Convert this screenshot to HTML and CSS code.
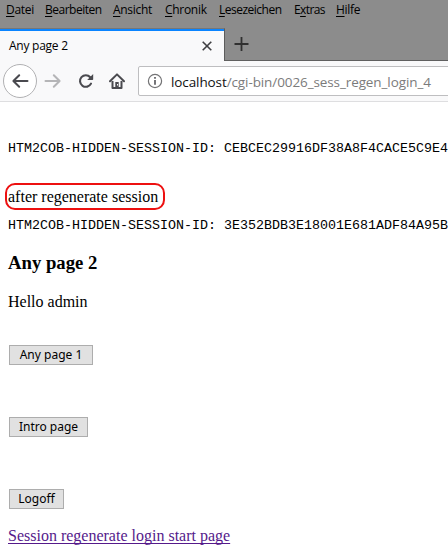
FILE: index.html
```html
<!DOCTYPE html>
<html lang="de">
<head>
<meta charset="utf-8">
<title>Any page 2</title>
<link rel="stylesheet" href="styles.css">
</head>
<body>
<nav class="menu">
  <span class="m-datei"><u>D</u>atei</span>
  <span class="m-bearbeiten"><u>B</u>earbeiten</span>
  <span class="m-ansicht"><u>A</u>nsicht</span>
  <span class="m-chronik"><u>C</u>hronik</span>
  <span class="m-lesezeichen"><u>L</u>esezeichen</span>
  <span class="m-extras">E<u>x</u>tras</span>
  <span class="m-hilfe"><u>H</u>ilfe</span>
</nav>
<div class="tabs">
  <div class="tab">
    <span class="tab-title">Any page 2</span>
    <svg width="12" height="12" viewBox="0 0 12 12"><path d="M1.7 1.7 10.3 10.3M10.3 1.7 1.7 10.3" stroke="#3f3f42" stroke-width="1.6"/></svg>
  </div>
  <div class="strip">
    <svg width="16" height="16" viewBox="0 0 16 16"><path d="M8.5 1V15M1.5 8H15.5" stroke="#303030" stroke-width="1.8"/></svg>
  </div>
</div>
<div class="toolbar">
  <span class="back"><svg width="18" height="16" viewBox="0 0 18 16"><path d="M16.5 8H2.5M8.2 2.2 2.4 8 8.2 13.8" fill="none" stroke="#4a4a4f" stroke-width="2" stroke-linecap="round" stroke-linejoin="round"/></svg></span>
  <svg class="forward" width="18" height="16" viewBox="0 0 18 16"><path d="M1.5 8H15.5M9.8 2.2 15.6 8 9.8 13.8" fill="none" stroke="#b5b5b7" stroke-width="2" stroke-linecap="round" stroke-linejoin="round"/></svg>
  <svg class="reload" width="16" height="16" viewBox="0 0 16 16"><path d="M12.2 4.2A5.8 5.8 0 1 0 13 10.6" fill="none" stroke="#4a4a4f" stroke-width="2.1" stroke-linecap="round"/><path d="M15.2 1V6.2Q15.2 7 14.4 7H9.2Z" fill="#4a4a4f"/></svg>
  <svg class="home" width="16" height="16" viewBox="0 0 16 16"><path d="M1 8.3 8 1.4 15 8.3" fill="none" stroke="#4a4a4f" stroke-width="2" stroke-linecap="round" stroke-linejoin="round"/><path d="M3.5 8V15H12.5V8" fill="none" stroke="#4a4a4f" stroke-width="2" stroke-linejoin="round"/><path d="M6.3 15V9H9.7V15Z" fill="#4a4a4f"/><path d="M8.5 11V12.5" stroke="#f9f9fa"/></svg>
  <div class="address">
    <svg width="16" height="16" viewBox="0 0 16 16"><circle cx="8" cy="8" r="6.6" fill="none" stroke="#737375" stroke-width="1.2"/><path d="M8 7V11.7M8 4V5.7" stroke="#66666a" stroke-width="1.8"/></svg>
    <span class="url"><b>localhost</b>/cgi-bin/0026_sess_regen_login_4</span>
  </div>
</div>
<main>
  <pre>HTM2COB-HIDDEN-SESSION-ID: CEBCEC29916DF38A8F4CACE5C9E4</pre>
  <p class="marked">after regenerate session</p>
  <pre class="second">HTM2COB-HIDDEN-SESSION-ID: 3E352BDB3E18001E681ADF84A95B</pre>
  <h3>Any page 2</h3>
  <p class="hello">Hello admin</p>
  <button class="b-any">Any page 1</button>
  <button class="b-intro">Intro page</button>
  <button class="b-logoff">Logoff</button>
  <a href="#">Session regenerate login start page</a>
</main>
</body>
</html>
```
FILE: styles.css
```css
* { box-sizing: border-box; }
body { margin: 0; width: 448px; height: 558px; overflow: hidden; background: #fff; color: #000; font-family: "Liberation Serif", serif; }
svg { display: block; flex: none; }
.menu { display: flex; height: 28px; padding: 2px 0 0 6px; background: #8c8c8c; font: 12px/16px "Open Sans", sans-serif; white-space: nowrap; letter-spacing: -0.3px; }
.menu span { flex: none; }
.menu u { text-underline-offset: 2px; text-decoration-thickness: 1px; text-decoration-skip-ink: none; }
.m-datei { width: 39px; }
.m-bearbeiten { width: 68px; letter-spacing: -0.5px; }
.m-ansicht { width: 52px; }
.m-chronik { width: 54px; }
.m-lesezeichen { width: 75px; letter-spacing: -0.5px; }
.m-extras { width: 42px; letter-spacing: -0.6px; }
.tabs { display: flex; height: 33px; background: #8c8c8c; }
.tab { display: flex; justify-content: space-between; align-items: center; width: 225px; padding: 1px 11px 0 9px; border-top: 1px solid #777; border-right: 1px solid #5c5c5c; background: linear-gradient(#0a84ff 2px, #f9f9fa 2px); font: 12px/16px "Open Sans", sans-serif; letter-spacing: -0.25px; }
.tab-title { padding-top: 1px; }
.strip { flex: 1; padding: 8px 0 0 8px; border-bottom: 1px solid #606060; }
.toolbar { display: flex; align-items: center; height: 41px; background: #f9f9fa; border-bottom: 1px solid #dedee0; overflow: hidden; }
.back { display: flex; align-items: center; justify-content: center; flex: none; width: 34px; height: 34px; margin-left: 3px; border: 1px solid #b1b1b3; border-radius: 50%; background: #fff; }
.forward { margin-left: 7px; }
.reload { margin-left: 16px; }
.home { margin-left: 15px; }
.address { display: flex; align-items: center; flex: none; width: 330px; height: 30px; margin-left: 13px; padding-left: 8px; border: 1px solid #bebec0; border-radius: 2px; background: #fff; }
.url { margin: 1px 0 0 8px; font: 13.5px/20px "Open Sans", sans-serif; letter-spacing: -0.1px; color: #7b7b7b; white-space: nowrap; }
.url b { font-weight: 400; color: #111; }
main { display: flex; flex-direction: column; align-items: flex-start; padding: 39px 0 0 8px; font-size: 16px; line-height: 18px; white-space: nowrap; }
pre { margin: 0; font: 13.333px/16px "Liberation Mono", monospace; }
.marked { height: 27px; width: 160px; margin: 26px 0 0 -3px; padding: 3px 0 0 1px; border: 2px solid #ed1010; border-radius: 10px; }
.second { margin-top: 8px; }
h3 { margin: 18px 0 0; font-size: 18.7px; line-height: 22px; }
.hello { margin: 19px 0 0; }
button { display: flex; justify-content: center; align-items: center; height: 20px; margin-left: 1px; padding: 0; border: 1px solid #adadad; border-radius: 0; background: #e1e1e1; color: #000; font: 12px/18px "Noto Sans", sans-serif; }
.b-any { width: 84px; margin-top: 34px; }
.b-intro { width: 79px; margin-top: 52px; }
.b-logoff { width: 55px; margin-top: 52px; }
a { margin-top: 18px; color: #551a8b; text-underline-offset: 2px; text-decoration-skip-ink: none; }
```
